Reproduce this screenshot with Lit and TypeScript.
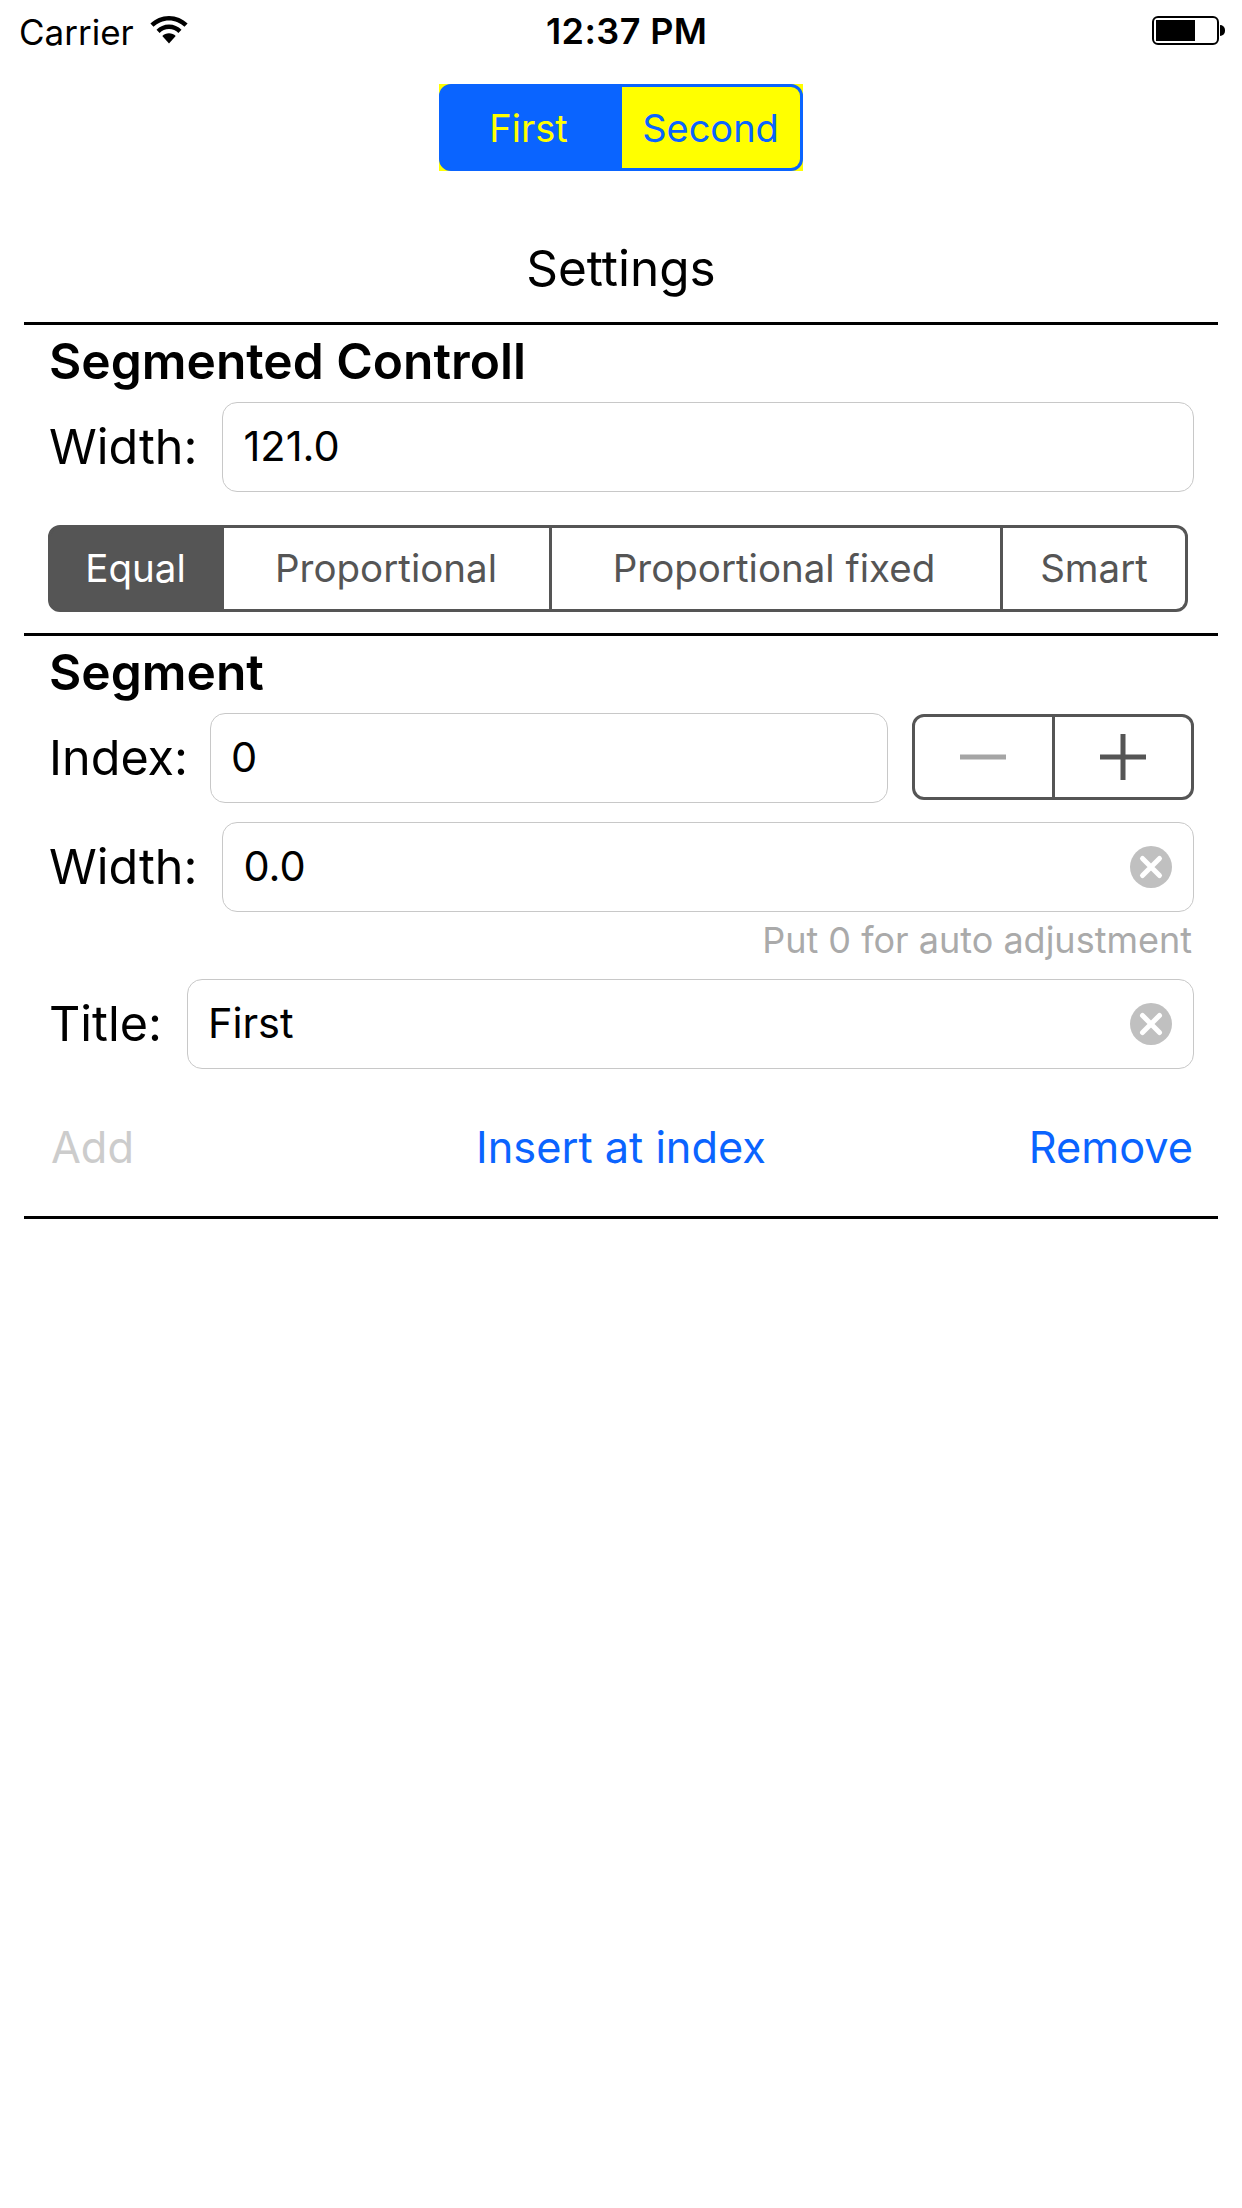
import { LitElement, html, css } from 'lit';
import { customElement } from 'lit/decorators.js';

const clearIcon = html`<svg class="clear" width="42" height="42" viewBox="0 0 42 42">
  <circle cx="21" cy="21" r="21" fill="#c0c0c0"></circle>
  <path d="M12.5 12.5 29.5 29.5M29.5 12.5 12.5 29.5" stroke="#fff" stroke-width="5" stroke-linecap="round"></path>
</svg>`;

@customElement('app-root')
export class AppRoot extends LitElement {
  static styles = css`
    :host {
      display: block;
      width: 1242px;
      height: 2208px;
      background: #fff;
      color: #000;
      font-family: Inter, "Noto Sans", sans-serif;
      overflow: hidden;
    }

    .status {
      display: grid;
      grid-template-columns: 1fr 1fr;
      height: 60px;
      padding: 0 17px 0 19px;
      box-sizing: border-box;
      position: relative;
    }
    .status-left {
      display: flex;
      align-items: flex-start;
      gap: 16px;
      padding-top: 11px;
      font-size: 35px;
      line-height: 42px;
    }
    .wifi {
      margin-top: 5px;
    }
    .time {
      position: absolute;
      left: 546px;
      top: 10px;
      font-size: 36px;
      font-weight: 600;
      letter-spacing: 0.4px;
      line-height: 42px;
    }
    .status-right {
      display: flex;
      justify-content: flex-end;
      align-items: flex-start;
      padding-top: 16px;
    }
    .battery {
      width: 67px;
      height: 29px;
      box-sizing: border-box;
      border: 2px solid #000;
      border-radius: 6px;
      padding: 2px;
    }
    .battery-fill {
      width: 39px;
      height: 100%;
      background: #000;
    }
    .battery-nub {
      width: 5px;
      height: 11px;
      margin: 9px 0 0 1px;
      background: #000;
      border-radius: 0 5px 5px 0;
    }

    .control-wrap {
      display: flex;
      justify-content: center;
      padding: 24px 1px 0 0;
    }
    .control {
      width: 364px;
      height: 87px;
      background: #ffff00;
    }
    .control-inner {
      display: flex;
      height: 100%;
      box-sizing: border-box;
      border: 3px solid #0a64ff;
      border-radius: 12px;
      background: #0a64ff;
      overflow: hidden;
      font-size: 38px;
    }
    .control-inner div {
      display: flex;
      align-items: center;
      justify-content: center;
    }
    .first {
      width: 174px;
      padding-right: 6px;
      color: #ffff00;
    }
    .second {
      flex: 1;
      background: #ffff00;
      color: #0a64ff;
    }

    .page-title {
      margin-top: 72px;
      height: 50px;
      line-height: 50px;
      text-align: center;
      font-size: 49.5px;
    }

    .section {
      margin: 0 24px;
      padding: 6px 24px 0 25px;
      border-top: 3px solid #000;
      box-sizing: border-box;
    }
    .section h2 {
      margin: 0 0 11px;
      font-size: 49.7px;
      font-weight: 600;
      line-height: 60px;
    }
    .section-one {
      margin-top: 29px;
      height: 311px;
    }
    .section-two {
      height: 583px;
    }
    .section-end {
      margin: 0 24px;
      border-top: 3px solid #000;
    }

    .row {
      display: flex;
      align-items: center;
      gap: 25px;
      font-size: 48.5px;
    }
    .row label {
      line-height: 60px;
    }
    .field {
      flex: 1;
      display: flex;
      align-items: center;
      justify-content: space-between;
      height: 90px;
      box-sizing: border-box;
      border: 1px solid #c8c8c8;
      border-radius: 15px;
      padding: 0 21px 0 20px;
      font-size: 41.5px;
    }
    .field span {
      margin-top: -3px;
    }
    .clear {
      flex: none;
    }

    .segments {
      display: flex;
      width: 1140px;
      height: 87px;
      margin: 33px 0 0 -1px;
      box-sizing: border-box;
      border: 3px solid #555;
      border-radius: 12px;
      background: #555;
      overflow: hidden;
      color: #555;
      font-size: 38.5px;
    }
    .segments div {
      display: flex;
      align-items: center;
      justify-content: center;
      box-sizing: border-box;
      border-left: 3px solid #555;
      background: #fff;
      padding: 0 4px 2px 0;
    }
    .segments div:first-child {
      border-left: none;
      background: #555;
      color: #fff;
      padding-right: 1px;
    }
    .segments div:nth-child(2) {
      padding-right: 1px;
    }
    .segments div:last-child {
      padding-right: 0;
    }

    .index-row {
      gap: 22px;
    }
    .index-row .field {
      flex: none;
      width: 678px;
    }
    .stepper {
      display: flex;
      width: 282px;
      height: 86px;
      margin: -2px 0 0 2px;
      box-sizing: border-box;
      border: 3px solid #555;
      border-radius: 12px;
    }
    .stepper div {
      flex: 1;
      display: flex;
      align-items: center;
      justify-content: center;
    }
    .stepper div + div {
      border-left: 3px solid #555;
    }

    .width-row {
      margin-top: 19px;
    }
    .hint {
      margin: 10px 2px 0 0;
      height: 57px;
      line-height: 36px;
      text-align: right;
      color: #aaa;
      font-size: 36px;
    }
    .actions {
      display: grid;
      grid-template-columns: 1fr auto 1fr;
      margin: 53px 1px 0 2px;
      font-size: 43.3px;
      line-height: 50px;
      color: #0a64ff;
    }
    .actions .off {
      color: #ccc;
    }
    .actions .middle {
      padding-right: 2px;
    }
    .actions .end {
      text-align: right;
    }
  `;

  render() {
    return html`
      <div class="status">
        <div class="status-left">
          <span>Carrier</span>
          <svg class="wifi" width="38" height="28" viewBox="0 0 38 28">
            <path d="M19 0C11.7 0 5.1 2.9.4 7.6l3.1 3.2C7.5 6.9 13 4.4 19 4.4s11.500 2.500 15.500 6.400l3.100-3.200C32.900 2.900 26.300 0 19 0Z"></path>
            <path d="M19 8.600c-4.900 0-9.300 2-12.500 5.100l3.100 3.200c2.400-2.400 5.700-3.900 9.400-3.900s7 1.500 9.400 3.900l3.100-3.200C28.300 10.600 23.900 8.600 19 8.600Z"></path>
            <path d="M19 17.200c-2.600 0-5 1-6.700 2.700L19 27.500l6.700-7.600C24 18.200 21.600 17.200 19 17.200Z"></path>
          </svg>
        </div>
        <div class="time">12:37 PM</div>
        <div class="status-right">
          <div class="battery"><div class="battery-fill"></div></div>
          <div class="battery-nub"></div>
        </div>
      </div>

      <div class="control-wrap">
        <div class="control">
          <div class="control-inner">
            <div class="first">First</div>
            <div class="second">Second</div>
          </div>
        </div>
      </div>

      <div class="page-title">Settings</div>

      <div class="section section-one">
        <h2>Segmented Controll</h2>
        <div class="row">
          <label>Width:</label>
          <div class="field"><span>121.0</span></div>
        </div>
        <div class="segments">
          <div style="width: 170px">Equal</div>
          <div style="width: 328px">Proportional</div>
          <div style="width: 451px">Proportional fixed</div>
          <div style="flex: 1">Smart</div>
        </div>
      </div>

      <div class="section section-two">
        <h2>Segment</h2>
        <div class="row index-row">
          <label>Index:</label>
          <div class="field"><span>0</span></div>
          <div class="stepper">
            <div>
              <svg width="46" height="46" viewBox="0 0 46 46"><path d="M0 23H46" stroke="#a5a5a5" stroke-width="5"></path></svg>
            </div>
            <div>
              <svg width="46" height="46" viewBox="0 0 46 46"><path d="M0 23H46M23 0V46" stroke="#555" stroke-width="5"></path></svg>
            </div>
          </div>
        </div>
        <div class="row width-row">
          <label>Width:</label>
          <div class="field"><span>0.0</span>${clearIcon}</div>
        </div>
        <div class="hint">Put 0 for auto adjustment</div>
        <div class="row">
          <label>Title:</label>
          <div class="field"><span>First</span>${clearIcon}</div>
        </div>
        <div class="actions">
          <span class="off">Add</span>
          <span class="middle">Insert at index</span>
          <span class="end">Remove</span>
        </div>
      </div>
      <div class="section-end"></div>
    `;
  }
}
